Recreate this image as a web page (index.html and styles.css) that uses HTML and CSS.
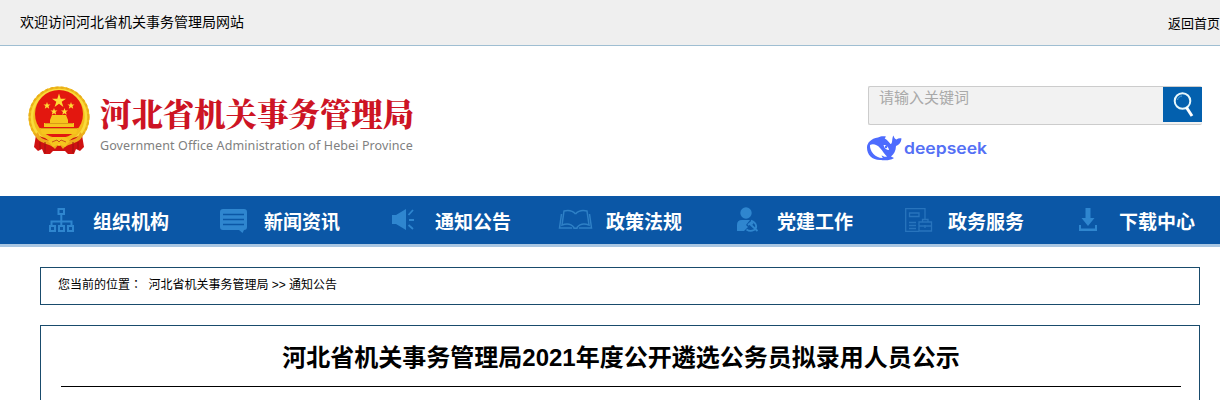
FILE: index.html
```
<!DOCTYPE html>
<html lang="zh-CN">
<head>
  <meta charset="UTF-8" />
  <title>河北省机关事务管理局</title>
  <link rel="stylesheet" href="styles.css">
</head>
<body>
  <div class="topbar">
    <span class="welcome">欢迎访问河北省机关事务管理局网站</span>
    <a class="home" href="#">返回首页</a>
  </div>

  <div class="header">
    <div class="logo">
      <svg class="emblem" viewBox="0 0 64 70" width="64" height="70">
        <circle cx="32" cy="32" r="30.500" fill="#f2bd1c" />
        <circle cx="32" cy="32" r="29.500" fill="none" stroke="#e8ae1a" stroke-width="2" stroke-dasharray="3 2.200" />
        <circle cx="32" cy="32" r="27" fill="none" stroke="#fadb3c" stroke-width="2.500" />
        <circle cx="32" cy="29" r="24" fill="#e3170f" />
        <path d="M9 50L18 53L28 60L32 61L36 60L46 53L55 50L57 62L53 66L49 64L47 69H41L38 66H26L23 69H17L15 64L11 66L7 62Z" fill="#cf1111" />
        <path d="M11 47C14 58 24 53 31 60L28 64C22 57 12 60 8 50ZM53 47C50 58 40 53 33 60L36 64C42 57 52 60 56 50Z" fill="#eda81c" />
        <path d="M13 57V64M18 57V68M46 57V68M51 57V64" stroke="#9e1210" fill="none" />
        <path d="M13 43H51L49 49H15ZM17 38H47V42H17ZM23 35L25 30H39L41 35V38H23Z" fill="#f6c51e" />
        <path d="M14 43.500H50M18 38.500H46" stroke="#d99b16" fill="none" />
        <path d="M26 52H38L43 56L38 62L32 59L26 62L21 56Z" fill="#f5c51e" />
        <path d="M25 57L30 55L32 57L34 55L39 57" stroke="#c9551a" fill="none" />
        <path d="M32 8.500L33.700 13.700H39L34.700 16.800L36.400 22L32 18.800L27.600 22L29.300 16.800L25 13.700H30.300Z" fill="#ffdc35" />
        <path id="star" d="M20 17L20.900 19.500H23.500L21.500 21.100L22.200 23.800L20 22.200L17.800 23.800L18.500 21.100L16.500 19.500H19.100Z" fill="#ffdc35" />
        <use href="#star" x="24" />
        <use href="#star" x="7" y="6" />
        <use href="#star" x="17.500" y="6" />
      </svg>
      <div class="names">
        <div class="name-cn">河北省机关事务管理局</div>
        <div class="name-en">Government Office Administration of Hebei Province</div>
      </div>
    </div>

    <div class="tools">
      <div class="search">
        <span class="keyword">请输入关键词</span>
        <button class="search-btn">
          <svg viewBox="0 0 39 35" width="39" height="35">
            <circle cx="19.500" cy="14" r="7.800" fill="none" stroke="#e7f7fb" stroke-width="2" />
            <path d="M14.500 13C15 10.500 17 9 19 9" fill="none" stroke="#5ba6d8" />
            <path d="M23.500 20.500L29 29" stroke="#fff" stroke-width="3" />
          </svg>
        </button>
      </div>
      <svg class="deepseek" viewBox="0 0 122 28" width="122" height="28">
        <path d="M12 3.500C15 2 17 2 20 2.500L18.700 4.500C21 5.500 23 8 24.500 10C27 10 25.500 4 27.500 1.500C28 4 29 5 30.500 5.500C32 4.300 34 4 35.500 4.500C35 9 33 11 30 12C29.800 17 28 20 25 22.500L28 24C23 27.500 17 26 14 26C6 26 1 21 1 13.500C1 9 5 4.500 12 3.500Z" fill="#4d6bfe" />
        <path d="M4 11C7 9.500 11 10.500 14 14C17 17 18 20 21 22.500C19 23.500 17 22 15.500 21.500C16 23 17 23 16.500 24C9 24 3.500 17 4 11Z" fill="#fff" />
        <path d="M17.500 11C20 10.500 22.500 13 23 16C20.500 16 18 14 17.500 11Z" fill="#fff" />
        <circle cx="20" cy="13" r="1.200" fill="#4d6bfe" />
        <text x="38" y="19.500" textLength="83" lengthAdjust="spacingAndGlyphs">deepseek</text>
      </svg>
    </div>
  </div>

  <div class="nav">
    <a class="item" href="#">
      <svg viewBox="0 0 36 28" width="36" height="28" fill="none" stroke="#2f86cf" stroke-width="2">
        <rect x="14.500" y="3" width="5.500" height="5" />
        <path d="M17.300 8V19M7.500 19V15.500H27.500V19" />
        <rect x="6" y="20" width="5" height="5" />
        <rect x="15" y="20" width="5" height="5" />
        <rect x="24" y="20" width="5" height="5" />
      </svg>
      组织机构
    </a>
    <a class="item" href="#">
      <svg viewBox="0 0 36 28" width="36" height="28">
        <path d="M8 3H29Q32 3 32 6V21Q32 24 29 24L27.500 27L24 24H8Q5 24 5 21V6Q5 3 8 3Z" fill="#2f86cf" />
        <path d="M8 8.500H29M8 13.500H29M8 18.500H29" stroke="#0b57a6" stroke-width="1.300" />
      </svg>
      新闻资讯
    </a>
    <a class="item" href="#">
      <svg viewBox="0 0 36 28" width="36" height="28">
        <path d="M6 9H10L20 3V24L10 18H6Z" fill="#2f86cf" />
        <path d="M22.500 9L27 4M23 14H28M22.500 19L27 23" stroke="#2f86cf" stroke-width="1.800" />
      </svg>
      通知公告
    </a>
    <a class="item" href="#">
      <svg viewBox="0 0 36 28" width="36" height="28" fill="none" stroke="#2f80c6" stroke-width="1.500">
        <path d="M18.500 8C15.500 4.500 11 4 7 5L5 19C9 17.500 14 17.500 17 21.500M18.500 8C21.500 4.500 26 4 30 5L32 19C28 17.500 23 17.500 20 21.500" />
        <path d="M4.500 8L2.500 22H15M32.500 8L34.500 22H22M16 21.500Q18.500 23 21 21.500" />
      </svg>
      政策法规
    </a>
    <a class="item" href="#">
      <svg viewBox="0 0 36 28" width="36" height="28">
        <circle cx="18" cy="7" r="5.700" fill="#2f86cf" />
        <path d="M9 25V19Q9 14 14 14H22L18 19L20 21L16 25Z" fill="#2f86cf" />
        <path d="M23 14.500C29 17 29.500 22 26 24Q22 26 18.500 23.500M20 19L23 16.500L25 18M22 18L29.500 25" stroke="#2f86cf" stroke-width="1.800" fill="none" />
      </svg>
      党建工作
    </a>
    <a class="item" href="#">
      <svg viewBox="0 0 36 28" width="36" height="28" fill="none" stroke="#2874bd" stroke-width="1.300">
        <path d="M26 13V2.700H6.700V25.300H20" />
        <path d="M10.500 7H20V10.500H10.500ZM10 16.500H17M10 19.500H17M10 22.500H17" />
        <path d="M20 16H32.500V25H20ZM23.500 16V13.500H29V16M20 20H32.500M26 19V22" />
      </svg>
      政务服务
    </a>
    <a class="item" href="#">
      <svg viewBox="0 0 36 28" width="36" height="28" fill="#2f86cf">
        <path d="M15.500 2H20.500V12H24.500L18 20L11.500 12H15.500Z" />
        <path d="M9 19H11V22.500H25V19H27V25H9Z" />
      </svg>
      下载中心
    </a>
  </div>

  <div class="position">您当前的位置<span class="colon" lang="zh-TW">：</span> <a href="#">河北省机关事务管理局</a> &gt;&gt; <a href="#">通知公告</a></div>

  <div class="article">
    <h1>河北省机关事务管理局2021年度公开遴选公务员拟录用人员公示</h1>
  </div>
</body>
</html>
```

FILE: styles.css
```
html, body {
  margin: 0;
  padding: 0;
  height: 100%;
  overflow: hidden;
}

body {
  background: #fff;
  color: #000;
  font-family: "Liberation Sans", "Noto Sans CJK SC", sans-serif;
  font-size: 12px;
}

a {
  color: inherit;
  text-decoration: none;
}

.topbar {
  display: flex;
  justify-content: space-between;
  box-sizing: border-box;
  height: 46px;
  padding-left: 20px;
  background: #efefef;
  border-bottom: 1px solid #9fbed2;
  line-height: 44px;
}

.welcome {
  font-size: 14px;
}

.home {
  font-size: 13px;
  line-height: 47px;
}

.header {
  display: flex;
  justify-content: space-between;
  height: 150px;
}

.logo {
  display: flex;
  padding: 39px 0 0 27px;
}

.names {
  padding: 5px 0 0 9px;
  white-space: nowrap;
}

.name-cn {
  color: #cd1424;
  font-family: "Noto Serif CJK SC", "Noto Sans CJK SC", serif;
  font-size: 31.4px;
  font-weight: 900;
  line-height: 46px;
}

.name-en {
  margin-top: 1px;
  color: #808080;
  font-family: "Noto Sans", sans-serif;
  font-size: 12.5px;
  letter-spacing: 0.1px;
  line-height: 17px;
}

.tools {
  width: 354px;
  padding-top: 40px;
}

.search {
  display: flex;
  justify-content: space-between;
  box-sizing: border-box;
  width: 334px;
  height: 39px;
  margin-left: 2px;
  background: #f2f2f2;
  border: 1px solid #ccc;
  border-right: 0;
  border-radius: 2px;
}

.keyword {
  padding-left: 10px;
  color: #a9a9a9;
  font-size: 15px;
  line-height: 21px;
}

.search-btn {
  width: 39px;
  height: 35px;
  padding: 0;
  border: 0;
  background: #0360ae;
}

.search-btn svg,
.deepseek {
  display: block;
}

.deepseek {
  margin-top: 9px;
}

.deepseek text {
  fill: #5470f5;
  font-family: Inter, sans-serif;
  font-size: 16px;
  font-weight: 600;
}

.nav {
  display: grid;
  grid-template-columns: repeat(7, 171px);
  box-sizing: border-box;
  height: 51px;
  padding-left: 44px;
  overflow: hidden;
  background: #0b57a6;
  border-bottom: 3px solid #a9c6e2;
}

.item {
  display: flex;
  gap: 13px;
  color: #fff;
  font-size: 19px;
  font-weight: bold;
  line-height: 53px;
  white-space: nowrap;
}

.item svg {
  margin-top: 10px;
}

.position {
  box-sizing: border-box;
  width: 1160px;
  height: 38px;
  margin: 20px 0 0 40px;
  padding-left: 17px;
  border: 1px solid #194b6c;
  line-height: 32px;
}

.colon {
  font-family: "Noto Sans CJK TC", sans-serif;
}

.position a:first-of-type {
  margin-left: 3px;
}

.article {
  box-sizing: border-box;
  width: 1160px;
  height: 75px;
  margin: 20px 0 0 40px;
  padding-left: 20px;
  border: 1px solid #194b6c;
  border-bottom: 0;
}

h1 {
  box-sizing: border-box;
  width: 1120px;
  height: 61px;
  margin: 0;
  border-bottom: 1px solid #000;
  font-size: 24px;
  line-height: 63px;
  text-align: center;
}
```
